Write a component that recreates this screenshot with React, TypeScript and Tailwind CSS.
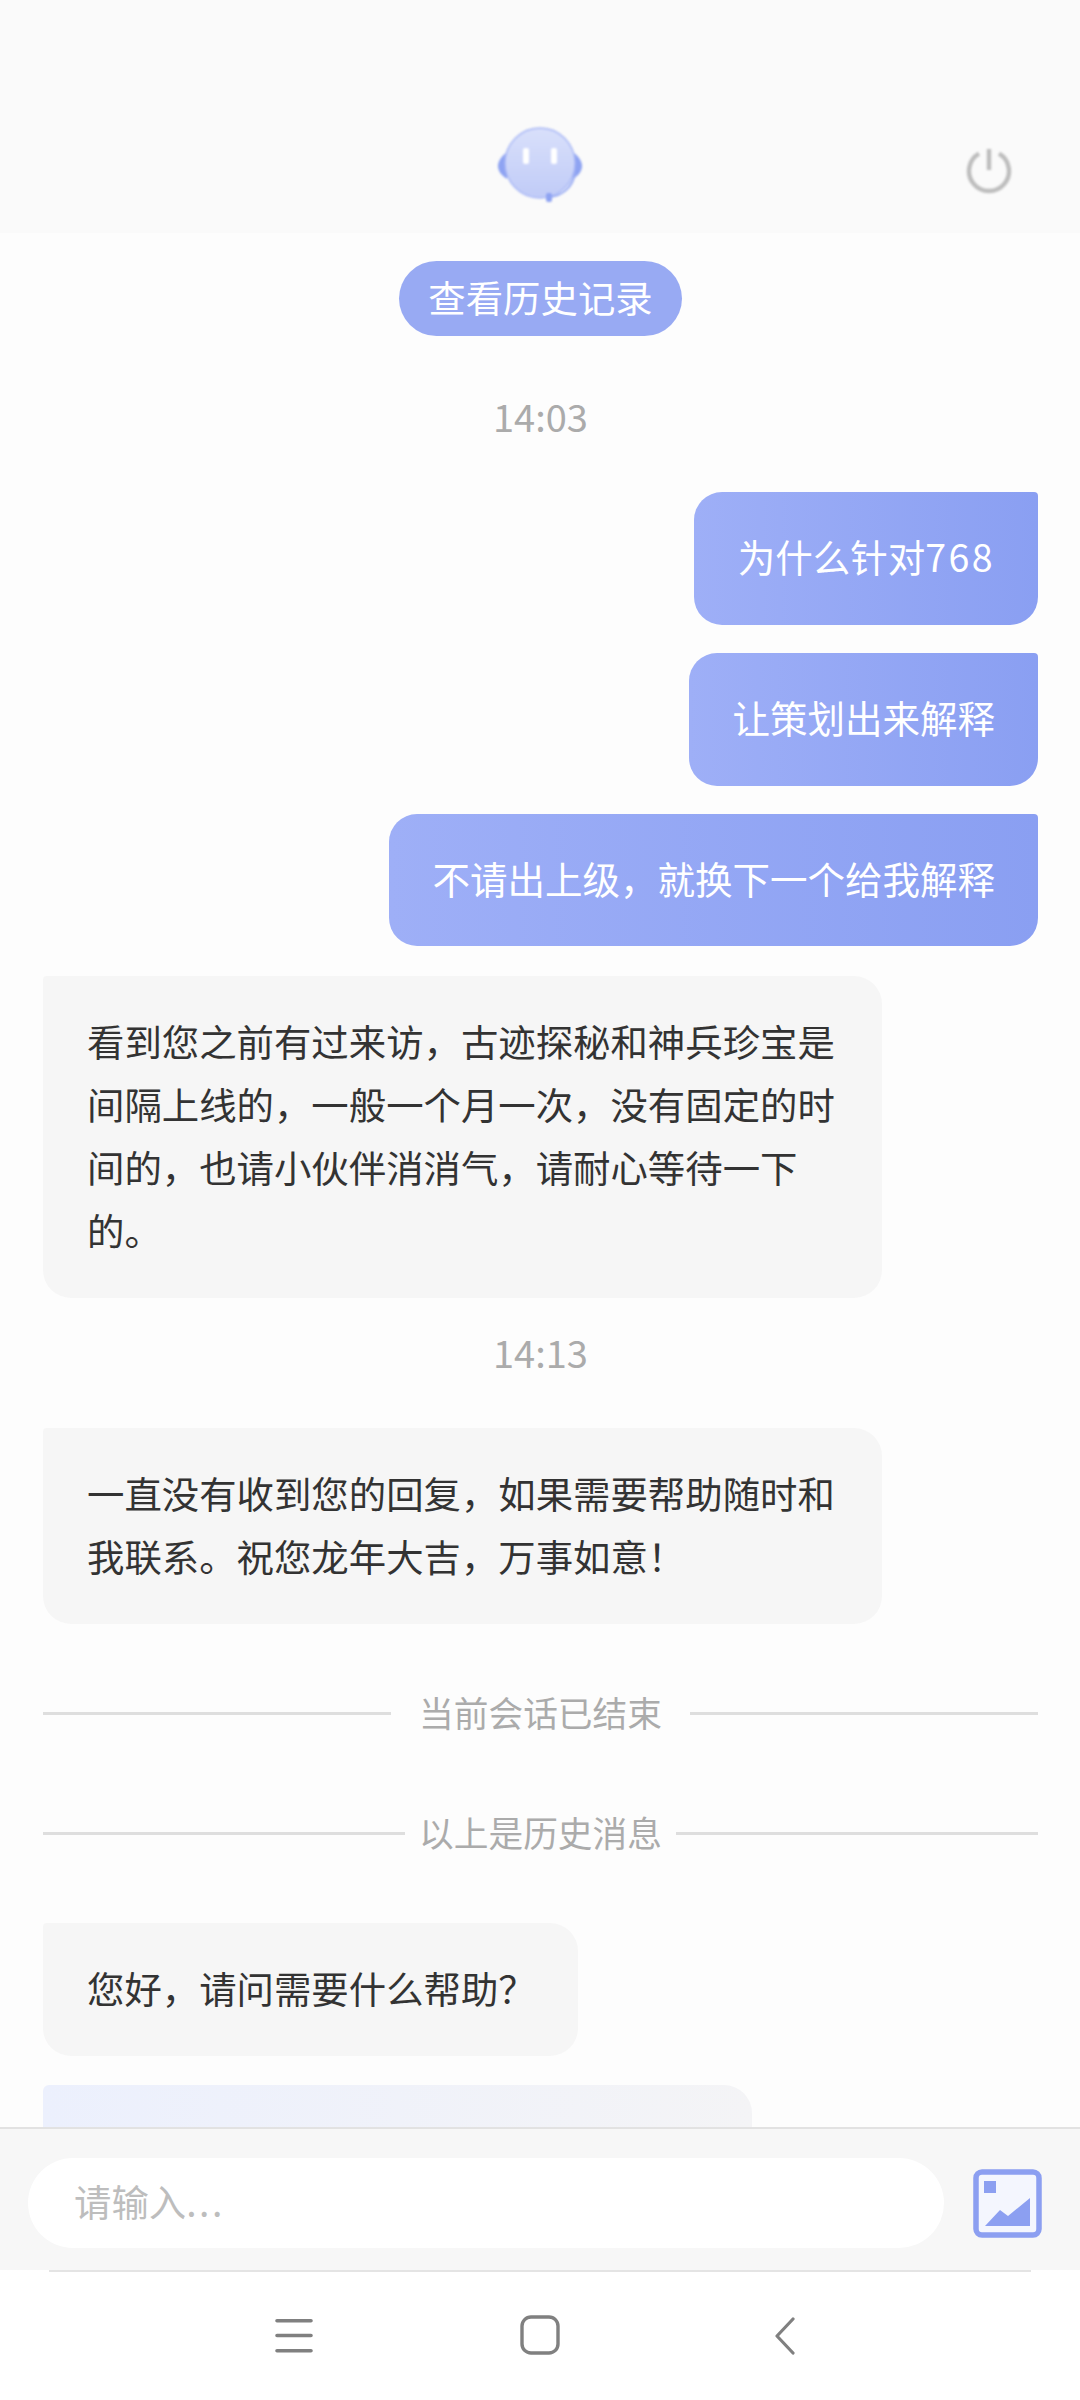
import type { ReactNode } from "react";

function TimeLabel({ children, cls }: { children: string; cls: string }) {
  return <div className={`pb-[2px] text-center text-[38px] leading-[40px] text-[#ababab] ${cls}`}>{children}</div>;
}
function Sent({ children, cls }: { children: ReactNode; cls: string }) {
  return (
    <div className={`self-end rounded-[28px] rounded-tr-[4px] bg-gradient-to-r from-[#9eaff7] to-[#8a9ff2] pb-[38px] pl-[44px] pr-[43px] pt-[32px] text-[37.5px] leading-[63px] text-white ${cls}`}>
      {children}
    </div>
  );
}
function Received({ children, cls }: { children: string; cls: string }) {
  return (
    <div className={`self-start rounded-[28px] rounded-tl-[4px] bg-[#f6f6f6] pb-[36px] pl-[44px] pr-[45px] pt-[34px] text-[37.4px] leading-[63px] text-[#333333] ${cls}`}>
      {children}
    </div>
  );
}
function Divider({ children, left, right, cls }: { children: string; left: string; right: string; cls: string }) {
  return (
    <div className={`flex items-center justify-between ${cls}`}>
      <div className={`h-[3px] bg-[#dedede] ${left}`} />
      <div className="pb-[3px] text-[34.7px] leading-[44px] text-[#ababab]">{children}</div>
      <div className={`h-[3px] bg-[#dedede] ${right}`} />
    </div>
  );
}
export default function App() {
  return (
    <div className="flex h-[2400px] w-[1080px] flex-col overflow-hidden bg-[#fdfdfd] [font-family:'Noto_Sans_CJK_SC','Noto_Sans',sans-serif]">
      <header className="relative flex h-[233px] shrink-0 items-start justify-center bg-[#fafafa]">
        <svg className="mt-[127px] h-[76px] w-[84px] blur-[1.2px]" viewBox="0 0 84 76">
          <defs>
            <linearGradient id="ball" x1="0" y1="0" x2="0" y2="1">
              <stop offset="0" stopColor="#d9e0fb" />
              <stop offset="1" stopColor="#c0cbf7" />
            </linearGradient>
          </defs>
          <path d="M9 25C3 30 0 34 0 39C0 44 3 48 9 52Z" fill="#8ea3f2" />
          <path d="M75 25C81 30 84 34 84 39C84 44 81 48 75 52Z" fill="#8ea3f2" />
          <ellipse cx="42" cy="36" rx="35" ry="35" fill="url(#ball)" stroke="#a9b8f5" strokeWidth="1.5" />
          <rect x="25" y="21" width="6" height="16" rx="2" fill="#ffffff" />
          <rect x="53" y="21" width="6" height="16" rx="2" fill="#ffffff" />
          <path d="M77 46C75 60 64 69 52 70" fill="none" stroke="#98abf3" strokeWidth="2" />
          <rect x="48" y="66" width="6" height="9" rx="2" fill="#8ea3f2" />
        </svg>
        <svg className="absolute left-[966px] top-[148px] h-[46px] w-[46px] blur-[0.8px]" viewBox="0 0 46 46" fill="none" stroke="#bdbdbd" strokeWidth="4.4">
          <path d="M13 5.7A20 20 0 1 0 33 5.7" />
          <path d="M23 1V22" />
        </svg>
      </header>

      <main className="flex min-h-0 flex-1 flex-col overflow-hidden pl-[43px] pr-[42px]">
        <div className="mt-[28px] flex h-[75px] w-[283px] shrink-0 items-center justify-center self-center rounded-full bg-[#98aaf3] pb-[3px] text-[37.4px] text-white">
          查看历史记录
        </div>
        <TimeLabel cls="mt-[60px] shrink-0">14:03</TimeLabel>
        <Sent cls="mt-[54px] h-[133px] shrink-0">为什么针对<span className="tracking-[2.4px]">768</span></Sent>
        <Sent cls="mt-[28px] h-[133px] shrink-0">让策划出来解释</Sent>
        <Sent cls="mt-[28px] h-[132px] shrink-0">不请出上级，就换下一个给我解释</Sent>
        <Received cls="mt-[30px] w-[839px] shrink-0">看到您之前有过来访，古迹探秘和神兵珍宝是间隔上线的，一般一个月一次，没有固定的时间的，也请小伙伴消消气，请耐心等待一下的。</Received>
        <TimeLabel cls="mt-[34px] shrink-0">14:13</TimeLabel>
        <Received cls="mt-[54px] w-[839px] shrink-0">一直没有收到您的回复，如果需要帮助随时和我联系。祝您龙年大吉，万事如意！</Received>
        <Divider cls="mt-[66px] shrink-0" left="w-[348px]" right="w-[348px]">当前会话已结束</Divider>
        <Divider cls="mt-[73px] shrink-0" left="w-[362px]" right="w-[362px]">以上是历史消息</Divider>
        <Received cls="mt-[66px] w-[535px] shrink-0 whitespace-nowrap">您好，请问需要什么帮助？</Received>
        <div className="mt-[29px] h-[60px] w-[709px] shrink-0 rounded-tl-[6px] rounded-tr-[28px] bg-gradient-to-r from-[#ecf0fd] to-[#f4f4f6]" />
      </main>

      <footer className="flex h-[143px] shrink-0 items-start border-t-2 border-[#e2e2e2] bg-[#f7f7f7] pl-[28px] pt-[29px]">
        <div className="flex h-[90px] w-[916px] items-center rounded-full bg-white pb-[3px] pl-[46px] text-[37.4px] text-[#bdbdbd]">
          请输入<span className="tracking-[2.5px]">...</span>
        </div>
        <svg className="ml-[29px] mt-[11px] h-[69px] w-[69px]" viewBox="0 0 69 69">
          <rect x="3" y="3" width="63" height="63" rx="6" fill="#f4f6fe" stroke="#8c9ff1" strokeWidth="5.5" />
          <rect x="11" y="12" width="12" height="12" fill="#8c9ff1" />
          <path d="M12 57L27 41L35 47L57 29V57Z" fill="#8c9ff1" />
        </svg>
      </footer>

      <nav className="relative flex h-[130px] shrink-0 items-start bg-white">
        <div className="absolute left-[49px] right-[49px] top-0 h-[2px] bg-[#e4e4e4]" />
        <svg className="ml-[274px] mt-[46px] h-[38px] w-[39px]" viewBox="0 0 39 38" fill="none" stroke="#808080" strokeWidth="3.6" strokeLinecap="round">
          <path d="M3 4.7H37M3 19.5H37M3 34.7H37" />
        </svg>
        <svg className="ml-[207px] mt-[45px] h-[40px] w-[40px]" viewBox="0 0 40 40" fill="none" stroke="#808080" strokeWidth="3.4">
          <rect x="2" y="2" width="36" height="36" rx="9" />
        </svg>
        <svg className="ml-[215px] mt-[47px] h-[38px] w-[22px]" viewBox="0 0 22 38" fill="none" stroke="#808080" strokeWidth="3.2" strokeLinecap="round" strokeLinejoin="round">
          <path d="M18 2L2 19L18 36" />
        </svg>
      </nav>
    </div>
  );
}
